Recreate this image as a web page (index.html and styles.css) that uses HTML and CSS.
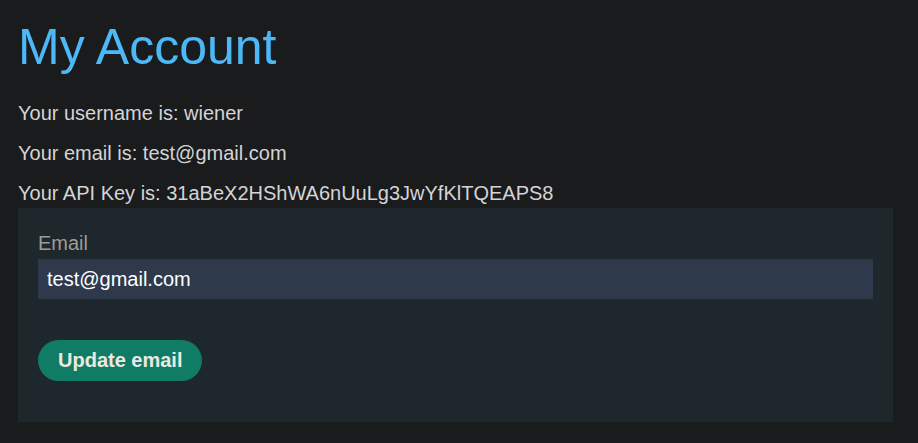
FILE: index.html
```html
<!DOCTYPE html>
<html>
<head>
<meta charset="utf-8">
<link rel="stylesheet" href="styles.css">
</head>
<body>
<div class="page">
  <h1 class="title">My Account</h1>
  <p class="info">Your username is: wiener</p>
  <p class="info">Your email is: test@gmail.com</p>
  <p class="info last">Your API Key is: 31aBeX2HShWA6nUuLg3JwYfKlTQEAPS8</p>
  <form class="panel">
    <label class="label">Email</label>
    <input class="field" type="text" value="test@gmail.com">
    <button class="btn" type="button">Update email</button>
  </form>
</div>
</body>
</html>
```
FILE: styles.css
```css
html, body {
  margin: 0;
  padding: 0;
  background: #1a1b1d;
}
body {
  font-family: "Liberation Sans", Arial, sans-serif;
  color: #d4d4d4;
}
.page {
  padding: 17px 25px 0 18px;
}
.title {
  margin: 0;
  font-size: 50px;
  font-weight: normal;
  line-height: 60px;
  color: #4cb8f7;
}
.info {
  margin: 16px 0 0 0;
  font-size: 20px;
  line-height: 24px;
}
.title + .info {
  margin-top: 24px;
}
.info.last {
  margin-bottom: 3px;
}
.panel {
  display: flex;
  flex-direction: column;
  align-items: flex-start;
  background: #1d272c;
  padding: 23px 20px 41px 20px;
  margin: 0;
}
.label {
  font-size: 20px;
  line-height: 24px;
  color: #a09c96;
  margin-bottom: 4px;
}
.field {
  box-sizing: border-box;
  width: 100%;
  height: 40px;
  border: none;
  outline: none;
  background: #2e3a4c;
  color: #ffffff;
  font-family: "Liberation Sans", Arial, sans-serif;
  font-size: 20px;
  padding: 0 9px;
  margin: 0 0 41px 0;
}
.btn {
  height: 41px;
  padding: 0 20px;
  border: none;
  border-radius: 21px;
  background: #107c66;
  color: #ece9e1;
  font-family: "Liberation Sans", Arial, sans-serif;
  font-weight: bold;
  font-size: 20px;
}
```
